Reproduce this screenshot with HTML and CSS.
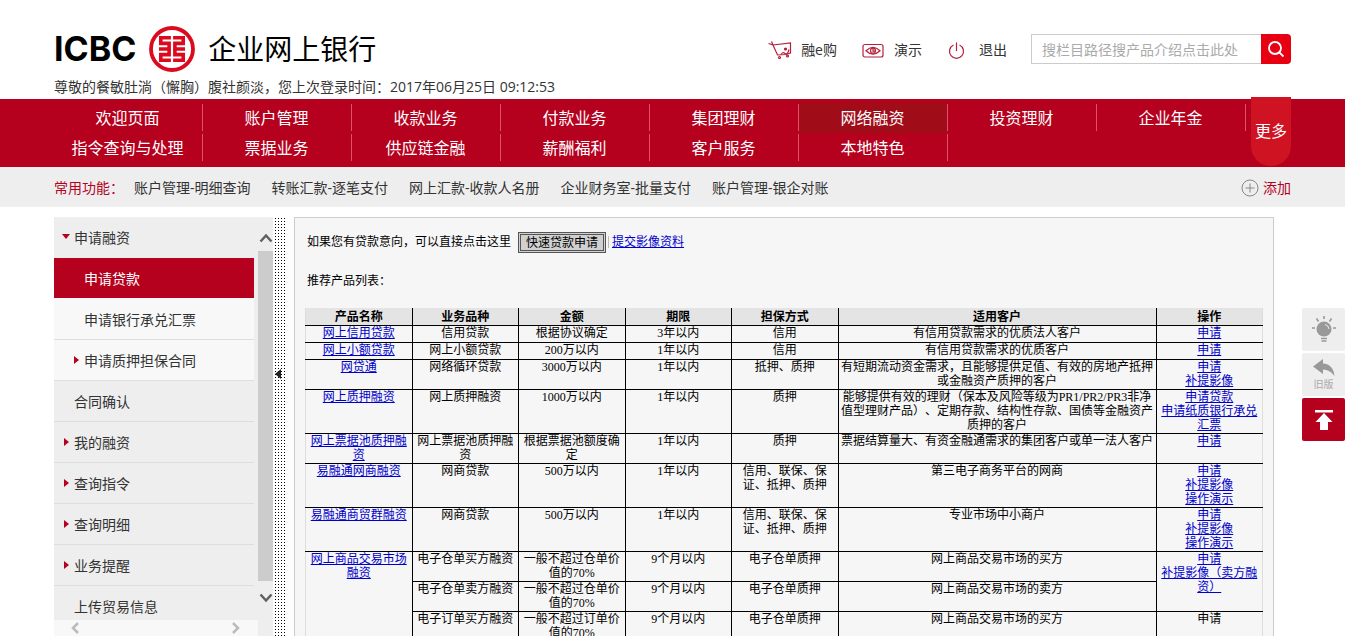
FILE: index.html
```html
<!DOCTYPE html>
<html lang="zh-CN">
<head>
<meta charset="utf-8">
<title>企业网上银行</title>
<link rel="stylesheet" href="styles.css">
</head>
<body>
<header class="header wrap">
  <div class="header-left">
    <div class="brand">
      <span class="brand-name">ICBC</span>
      <svg class="emblem" viewBox="0 0 46 46" aria-hidden="true">
        <circle cx="23" cy="23" r="21" fill="none" stroke="#dc0a1e" stroke-width="3.800"/>
        <g fill="none" stroke="#dc0a1e" stroke-width="3.600">
          <path d="M21.900 11.800H11.800V17.400H20.100V23H10"/>
          <path d="M21.900 34.200H11.800V28.600H20.100V23"/>
          <path d="M24.100 11.800H34.200V17.400H25.900V23H36"/>
          <path d="M24.100 34.200H34.200V28.600H25.900V23"/>
        </g>
      </svg>
      <h1 class="brand-title">企业网上银行</h1>
    </div>
    <p class="welcome">尊敬的餐敏肚淌（懈胸）腹社颜淡，您上次登录时间：2017年06月25日 09:12:53</p>
  </div>
  <div class="tools">
    <a class="tool" href="#">
      <svg class="tool-icon" viewBox="0 0 24 20" fill="none" stroke="#b5203c" stroke-width="1.200" aria-hidden="true">
        <path d="M0.500 3.500L5 5L9.500 15L18 14.500L22.500 13L22.500 3L5 5M3.500 1.500L5 5"/>
        <path d="M13 14.500Q14.500 11.500 17 13.500T21 9.500"/>
        <circle cx="17.500" cy="9" r="1" fill="#b5203c"/><circle cx="11.500" cy="17.500" r="1"/><circle cx="19.500" cy="16" r="1"/>
      </svg>融e购</a>
    <a class="tool" href="#">
      <svg class="tool-icon" viewBox="0 0 24 20" fill="none" stroke="#b5203c" stroke-width="1.200" aria-hidden="true">
        <rect x="2" y="4.500" width="20" height="12.500" rx="2"/>
        <path d="M5 10.700Q12 4 19 10.700Q12 17.500 5 10.700Z"/>
        <circle cx="12" cy="10.700" r="2.500"/><path d="M12 9V11.200H14"/>
      </svg>演示</a>
    <a class="tool" href="#">
      <svg class="tool-icon" viewBox="0 0 24 20" fill="none" stroke="#b5203c" stroke-width="1.200" aria-hidden="true">
        <path d="M7.500 5A7 7 0 1 0 13.500 5M10.500 2.500V11"/>
      </svg>退出</a>
    <form class="search">
      <input class="search-input" type="text" aria-label="搜索" placeholder="搜栏目路径搜产品介绍点击此处">
      <button class="search-button" type="button" aria-label="搜索">
        <svg viewBox="0 0 20 20" width="20" height="20" fill="none" stroke="#fff" stroke-width="1.800" aria-hidden="true"><circle cx="9" cy="9" r="6"/><path d="M13.300 13.300L17.500 17.500"/></svg>
      </button>
    </form>
  </div>
</header>

<nav class="nav">
  <div class="wrap nav-inner">
    <div class="nav-grid">
      <a href="#">欢迎页面</a><a href="#">账户管理</a><a href="#">收款业务</a><a href="#">付款业务</a><a href="#">集团理财</a><a class="active" href="#">网络融资</a><a href="#">投资理财</a><a href="#">企业年金</a>
      <a href="#">指令查询与处理</a><a href="#">票据业务</a><a href="#">供应链金融</a><a href="#">薪酬福利</a><a href="#">客户服务</a><a href="#">本地特色</a>
    </div>
    <a class="more" href="#">更多</a>
  </div>
</nav>

<div class="shortcuts">
  <div class="wrap shortcuts-inner">
    <span class="shortcuts-label">常用功能：</span>
    <a href="#">账户管理-明细查询</a><a href="#">转账汇款-逐笔支付</a><a href="#">网上汇款-收款人名册</a><a href="#">企业财务室-批量支付</a><a href="#">账户管理-银企对账</a>
    <button class="add" type="button">
      <svg viewBox="0 0 18 18" width="18" height="18" fill="none" stroke="#888" aria-hidden="true"><circle cx="9" cy="9" r="8"/><path d="M4.500 9H13.500M9 4.500V13.500"/></svg>添加</button>
  </div>
</div>

<main class="wrap main">
  <aside class="sidebar">
    <div class="side-view">
      <ul class="menu">
        <li><a class="open" href="#">申请融资</a></li>
        <li><a class="sub current" href="#">申请贷款</a></li>
        <li><a class="sub" href="#">申请银行承兑汇票</a></li>
        <li><a class="sub closed" href="#">申请质押担保合同</a></li>
        <li><a href="#">合同确认</a></li>
        <li><a class="closed" href="#">我的融资</a></li>
        <li><a class="closed" href="#">查询指令</a></li>
        <li><a class="closed" href="#">查询明细</a></li>
        <li><a class="closed" href="#">业务提醒</a></li>
        <li><a href="#">上传贸易信息</a></li>
      </ul>
      <div class="scroll-x">
        <svg viewBox="0 0 10 12" width="10" height="12" fill="none" stroke="#bbb" stroke-width="2.500" aria-hidden="true"><path d="M8 1L3 6L8 11"/></svg>
        <svg viewBox="0 0 10 12" width="10" height="12" fill="none" stroke="#bbb" stroke-width="2.500" aria-hidden="true"><path d="M2 1L7 6L2 11"/></svg>
      </div>
    </div>
    <div class="scroll-y">
      <svg viewBox="0 0 14 10" width="14" height="10" fill="none" stroke="#606060" stroke-width="2.500" aria-hidden="true"><path d="M1.500 8.500L7 2.500L12.500 8.500"/></svg>
      <span class="thumb"></span>
      <svg viewBox="0 0 14 10" width="14" height="10" fill="none" stroke="#606060" stroke-width="2.500" aria-hidden="true"><path d="M1.500 1.500L7 7.500L12.500 1.500"/></svg>
    </div>
  </aside>
  <div class="splitter"><span class="splitter-arrow"></span></div>

  <section class="panel">
    <p class="apply">如果您有贷款意向，可以直接点击这里 <button class="quick" type="button">快速贷款申请</button><span class="bar"></span><a href="#">提交影像资料</a></p>
    <p class="list-title">推荐产品列表：</p>
    <table class="products">
      <colgroup><col class="c"><col class="c"><col class="c"><col class="c"><col class="c"><col><col class="c"></colgroup>
      <thead>
        <tr><th>产品名称</th><th>业务品种</th><th>金额</th><th>期限</th><th>担保方式</th><th>适用客户</th><th>操作</th></tr>
      </thead>
      <tbody>
        <tr><td><a href="#">网上信用贷款</a></td><td>信用贷款</td><td>根据协议确定</td><td>3年以内</td><td>信用</td><td>有信用贷款需求的优质法人客户</td><td class="ops"><a href="#">申请</a></td></tr>
        <tr><td><a href="#">网上小额贷款</a></td><td>网上小额贷款</td><td>200万以内</td><td>1年以内</td><td>信用</td><td>有信用贷款需求的优质客户</td><td class="ops"><a href="#">申请</a></td></tr>
        <tr><td><a href="#">网贷通</a></td><td>网络循环贷款</td><td>3000万以内</td><td>1年以内</td><td>抵押、质押</td><td>有短期流动资金需求，且能够提供足值、有效的房地产抵押或金融资产质押的客户</td><td class="ops"><a href="#">申请</a><br><a href="#">补提影像</a></td></tr>
        <tr><td><a href="#">网上质押融资</a></td><td>网上质押融资</td><td>1000万以内</td><td>1年以内</td><td>质押</td><td>能够提供有效的理财（保本及风险等级为PR1/PR2/PR3非净值型理财产品）、定期存款、结构性存款、国债等金融资产质押的客户</td><td class="ops"><a href="#">申请贷款</a><br><a href="#">申请纸质银行承兑汇票</a></td></tr>
        <tr><td><a href="#">网上票据池质押融资</a></td><td>网上票据池质押融资</td><td>根据票据池额度确定</td><td>1年以内</td><td>质押</td><td>票据结算量大、有资金融通需求的集团客户或单一法人客户</td><td class="ops"><a href="#">申请</a></td></tr>
        <tr><td><a href="#">易融通网商融资</a></td><td>网商贷款</td><td>500万以内</td><td>1年以内</td><td>信用、联保、保证、抵押、质押</td><td>第三电子商务平台的网商</td><td class="ops"><a href="#">申请</a><br><a href="#">补提影像</a><br><a href="#">操作演示</a></td></tr>
        <tr><td><a href="#">易融通商贸群融资</a></td><td>网商贷款</td><td>500万以内</td><td>1年以内</td><td>信用、联保、保证、抵押、质押</td><td>专业市场中小商户</td><td class="ops"><a href="#">申请</a><br><a href="#">补提影像</a><br><a href="#">操作演示</a></td></tr>
        <tr><td rowspan="3"><a href="#">网上商品交易市场融资</a></td><td>电子仓单买方融资</td><td>一般不超过仓单价值的70%</td><td>9个月以内</td><td>电子仓单质押</td><td>网上商品交易市场的买方</td><td class="ops" rowspan="2"><a href="#">申请</a><br><a href="#">补提影像（卖方融资）</a></td></tr>
        <tr><td>电子仓单卖方融资</td><td>一般不超过仓单价值的70%</td><td>9个月以内</td><td>电子仓单质押</td><td>网上商品交易市场的卖方</td></tr>
        <tr><td>电子订单买方融资</td><td>一般不超过订单价值的70%</td><td>9个月以内</td><td>电子仓单质押</td><td>网上商品交易市场的买方</td><td class="ops">申请</td></tr>
      </tbody>
    </table>
  </section>
</main>

<div class="float-tools">
  <button type="button" aria-label="提示">
    <svg viewBox="0 0 28 30" width="28" height="30" aria-hidden="true"><g stroke="#999" stroke-width="1.600" fill="none"><path d="M14 1V4M6.500 3.500L8.500 6.500M21.500 3.500L19.500 6.500M2 13H5M23 13H26M11 23.500H17M11.500 26H16.500"/></g><circle cx="14" cy="14" r="7.500" fill="#999"/><path d="M15 9.500A5 5 0 0 1 19 14" stroke="#eee" fill="none"/></svg>
  </button>
  <button type="button">
    <svg viewBox="0 0 24 18" width="24" height="18" aria-hidden="true"><path d="M1 7.500L11 0V4.500Q21 5 22.500 17Q18 10.500 11 10.500V15Z" fill="#999"/></svg>
    <span>旧版</span>
  </button>
  <button class="to-top" type="button" aria-label="返回顶部">
    <svg viewBox="0 0 20 22" width="20" height="22" aria-hidden="true"><path d="M1 1H19V3.500H1ZM10 4L18.500 13H14V21H6V13H1.500Z" fill="#fff"/></svg>
  </button>
</div>
</body>
</html>
```
FILE: styles.css
```css
* { box-sizing: border-box; }

body {
  margin: 0;
  height: 100vh;
  display: flex;
  flex-direction: column;
  overflow: hidden;
  background: #fff;
  color: #333;
  font: 14px/20px "Open Sans", "Noto Sans CJK SC", sans-serif;
  text-spacing-trim: space-all;
}

h1, p, ul { margin: 0; padding: 0; }
ul { list-style: none; }
button { font: inherit; cursor: pointer; }
.wrap { width: calc(100% - 108px); margin: 0 auto; }

/* Header */
.header {
  display: flex;
  justify-content: space-between;
  align-items: flex-start;
  padding-top: 26px;
  height: 99px;
}
.brand { display: flex; align-items: center; gap: 13px; height: 46px; }
.brand-name { font: 700 34px/46px Inter, sans-serif; color: #000; }
.emblem { width: 46px; height: 46px; }
.brand-title { font-size: 28px; font-weight: 400; line-height: 46px; color: #000; }
.welcome { padding-top: 5px; white-space: nowrap; }
.tools { display: flex; align-items: center; padding-top: 8px; }
.tool { display: flex; align-items: center; gap: 9px; padding-top: 2px; margin-right: 24px; color: #333; text-decoration: none; }
.tool-icon { width: 24px; height: 20px; }
.search { display: flex; height: 30px; }
.search-input {
  width: 230px;
  padding: 2px 10px 0;
  border: 1px solid #ccc;
  border-right: 0;
  font: inherit;
}
.search-input::placeholder { color: #aaa; }
.search-button {
  display: flex;
  align-items: center;
  justify-content: center;
  width: 30px;
  padding: 0;
  border: 0;
  border-radius: 0 4px 4px 0;
  background: #e60012;
}

/* Main navigation */
.nav { background: #b5001e; }
.nav-inner { position: relative; height: 68px; padding: 4px 45px 0 0; }
.nav-grid { display: grid; grid-template-columns: repeat(8, 1fr); grid-auto-rows: 30px; }
.nav-grid a {
  position: relative;
  padding-right: 2px;
  color: #fff;
  font-size: 16px;
  line-height: 30px;
  text-align: center;
  text-decoration: none;
}
.nav-grid a::after {
  content: "";
  position: absolute;
  right: 0;
  top: 1px;
  bottom: 2px;
  width: 1px;
  background: #e0506a;
}
.nav-grid .active { background: #a00c18; }
.more {
  position: absolute;
  right: 0;
  top: -2px;
  width: 40px;
  height: 69px;
  border-radius: 0 0 20px 20px;
  background: #cf1322;
  color: #fff;
  font-size: 16px;
  line-height: 69px;
  text-align: center;
  text-decoration: none;
}

/* Shortcuts */
.shortcuts { background: #eee; }
.shortcuts-inner { display: flex; align-items: center; height: 40px; gap: 21px; padding-top: 2px; }
.shortcuts-inner a { color: #333; text-decoration: none; white-space: nowrap; }
.shortcuts-label { margin-right: -11px; color: #b5001e; }
.add {
  display: flex;
  align-items: center;
  gap: 4px;
  margin-left: auto;
  padding: 0;
  border: 0;
  background: none;
  color: #b5001e;
}

/* Sidebar */
.main { flex: 1; min-height: 0; display: flex; padding-top: 10px; }
.sidebar { display: flex; width: 219px; background: #eee; }
.side-view { display: flex; flex-direction: column; flex: 1; min-height: 0; }
.menu { flex: 1; min-height: 0; width: 200px; overflow: hidden; }
.menu a {
  display: flex;
  align-items: center;
  height: 41px;
  padding: 2px 0 0 20px;
  border-bottom: 1px solid #ddd;
  color: #333;
  text-decoration: none;
}
.menu .open { border-bottom-color: #eee; }
.menu .sub { padding-left: 30px; background: #f8f8f8; }
.menu .current { background: #b5001e; color: #fff; border-bottom-color: #f8f8f8; }
.menu .closed::before {
  content: "";
  margin: 0 5px 3px -10px;
  border: 4px solid transparent;
  border-left: 5px solid #b5001e;
  border-right: 0;
}
.menu .open::before {
  content: "";
  margin: 0 4px 4px -12px;
  border: 4px solid transparent;
  border-top: 5px solid #b5001e;
  border-bottom: 0;
}
.scroll-x {
  display: flex;
  justify-content: space-between;
  align-items: center;
  height: 16px;
  padding: 0 17px 0 16px;
  background: #f8f8f8;
}
.scroll-y {
  display: flex;
  flex-direction: column;
  align-items: center;
  gap: 12px;
  width: 15px;
  padding: 16px 0 33px;
}
.scroll-y svg { flex: none; }
.thumb { flex: 1; width: 15px; margin-top: -4px; background: #ccc; }
.splitter {
  display: flex;
  align-items: center;
  width: 12px;
  margin-left: 1px;
  padding-bottom: 106px;
  background: radial-gradient(circle, #000 0, #000 1px, transparent 1px) 0 0 / 3px 3px #fff;
}
.splitter-arrow { margin-left: 1px; border: 5px solid transparent; border-right: 6px solid #222; border-left: 0; }

/* Content panel */
.panel {
  flex: 1;
  margin: 0 17px 0 8px;
  padding: 12px 10px 0;
  border: 1px solid #ccc;
  border-bottom: 0;
  overflow: hidden;
  background: #f6f6f6;
  color: #000;
  font: 12px/14px "Liberation Serif", "Noto Sans CJK SC", sans-serif;
}
.panel a { color: #0000cc; }
.apply { display: flex; align-items: center; gap: 7px; height: 24px; padding-left: 2px; }
.quick {
  padding: 1px 5px 0;
  border: 3px double #555;
  background: #d0d0d0;
  color: #000;
  line-height: 14px;
}
.bar { width: 1px; height: 12px; margin: 0 -5px; background: #bbb; }
.bar + a { padding-left: 1px; }
.list-title { padding: 19px 2px; line-height: 16px; }
.products { width: 100%; table-layout: fixed; border-collapse: collapse; }
.products .c { width: 11.13%; }
.products th, .products td {
  height: 17px;
  padding: 0 1px 1px;
  border: 1px solid #000;
  text-align: center;
  vertical-align: top;
}
.products th { padding: 2px 1px 0; background: #e4e4e4; border-top: 0; font-weight: 700; }
.products td:first-child[rowspan], .products tr > :first-child:not(:nth-last-child(5)) { border-left-color: #ddd; }
.products th:last-child, .products .ops { border-right-color: #ddd; }

/* Floating tools */
.float-tools {
  position: absolute;
  right: 0;
  top: 308px;
  display: flex;
  flex-direction: column;
  gap: 2px;
}
.float-tools button {
  display: flex;
  flex-direction: column;
  align-items: center;
  justify-content: center;
  width: 43px;
  height: 43px;
  padding: 0;
  border: 0;
  border-radius: 2px;
  background: #eee;
  color: #aaa;
  font-size: 10px;
  line-height: 14px;
}
.float-tools .to-top { background: #b5001e; }
```
